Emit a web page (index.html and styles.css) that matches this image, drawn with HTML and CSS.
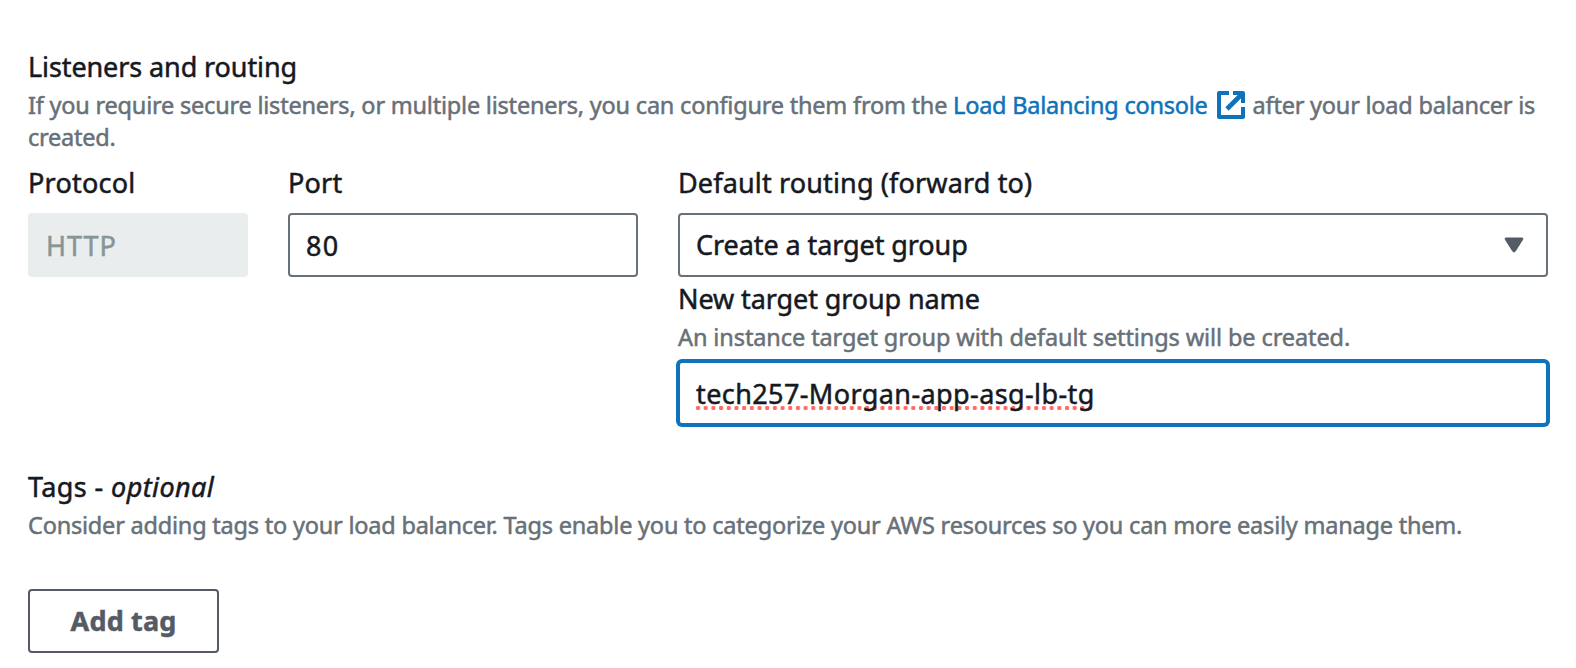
FILE: index.html
```
<!DOCTYPE html>
<html lang="en">
<head>
<meta charset="utf-8">
<title>Listeners and routing</title>
<link rel="stylesheet" href="styles.css">
</head>
<body>
<main class="panel">
  <section class="listeners">
    <h2 class="label t-listeners">Listeners and routing</h2>
    <p class="hint t-secure"><span class="hint-lead">If you require secure listeners, or multiple listeners, you can configure them from the</span> <a class="link">Load Balancing console<svg class="external" viewBox="0 0 28 28" width="28" height="28"><path d="M12 2H2V26H26V16M16 2H26V12" fill="none" stroke="currentColor" stroke-width="4" stroke-linejoin="round"/><path d="M25 3L10 18" fill="none" stroke="currentColor" stroke-width="4.6"/></svg></a><span class="hint-tail">after your load balancer is</span> <span class="hint-end">created.</span></p>
    <div class="fields">
      <div class="field">
        <div class="label t-protocol">Protocol</div>
        <div class="control disabled"><span class="t-http">HTTP</span></div>
      </div>
      <div class="field">
        <div class="label t-port">Port</div>
        <div class="control"><span class="t-eighty">80</span></div>
      </div>
      <div class="field">
        <div class="label t-routing">Default routing (forward to)</div>
        <div class="control select"><span class="t-create">Create a target group</span><svg class="caret" viewBox="0 0 20 16" width="20" height="16"><path d="M2 1H18Q19.6 1 18.7 2.4L11.3 14.2Q10 16 8.7 14.2L1.3 2.4Q.4 1 2 1Z" fill="#545b64" stroke="#545b64"/></svg></div>
        <div class="label name-label t-name">New target group name</div>
        <p class="hint t-instance">An instance target group with default settings will be created.</p>
        <div class="control focused"><span class="misspelled t-tech">tech257-Morgan-app-asg-lb-tg</span></div>
      </div>
    </div>
  </section>
  <section class="tags">
    <h2 class="label t-tags">Tags - <em>optional</em></h2>
    <p class="hint t-consider">Consider adding tags to your load balancer. Tags enable you to categorize your AWS resources so you can more easily manage them.</p>
    <button class="button"><span class="t-add">Add tag</span></button>
  </section>
</main>
</body>
</html>
```
FILE: styles.css
```
* { box-sizing: border-box; }
body {
  margin: 0;
  background: #fff;
  color: #16191f;
  font-family: "Noto Sans", "Open Sans", sans-serif;
  font-size: 27px;
  -webkit-text-stroke: .5px currentColor;
}
.panel { padding: 45px 28px 0; }
.label { margin: 0; height: 44px; line-height: 44px; font-size: 27px; font-weight: 400; white-space: nowrap; }
.hint { margin: 0; font-size: 23.5px; line-height: 32px; color: #687078; white-space: nowrap; letter-spacing: -.22px; }
.t-secure { height: 64px; white-space: normal; }
.hint-lead, .hint-tail, .link { white-space: nowrap; }
.hint-lead { letter-spacing: -.21px; }
.link { color: #0e73bb; letter-spacing: -.24px; }
.external { margin: 0 8px 0 9px; vertical-align: -5px; }
.t-listeners, .t-name { letter-spacing: -.1px; }
.t-protocol, .t-port { letter-spacing: .22px; }
.t-routing { letter-spacing: .15px; }
.t-create { letter-spacing: -.08px; }
.t-http { letter-spacing: 1px; }
.t-eighty { letter-spacing: 1.2px; }
.t-instance { letter-spacing: -.1px; }
.t-tech, .t-tags { letter-spacing: .4px; }
.t-consider { letter-spacing: -.21px; }
.t-add { letter-spacing: .15px; }
.fields { display: grid; grid-template-columns: 220px 350px 870px; column-gap: 40px; margin-top: 8px; }
.control {
  display: flex; align-items: center; height: 64px; margin-top: 8px; padding: 0 16px;
  border: 2px solid #687078; border-radius: 4px; background: #fff; white-space: nowrap;
}
.disabled { background: #eaeded; border-color: #eaeded; color: #879596; }
.select { justify-content: space-between; padding-right: 22px; }
.t-create { padding-bottom: 2px; }
.focused { border-color: #0e73bb; box-shadow: 0 0 0 2px #0e73bb; }
.misspelled {
  line-height: 36px; padding-top: 2px;
  background: radial-gradient(circle at 2px 2px, #ff6b66 1.9px, transparent 2.5px) 0 32px / 7.7px 4px repeat-x;
}
.tags { margin-top: 40px; }
.button {
  width: 191px; height: 64px; margin-top: 48px; padding: 0 0 2px; display: block;
  border: 2px solid #545b64; border-radius: 4px; background: #fff; color: #545b64;
  font: 700 27px "Noto Sans", "Open Sans", sans-serif;
}
```
